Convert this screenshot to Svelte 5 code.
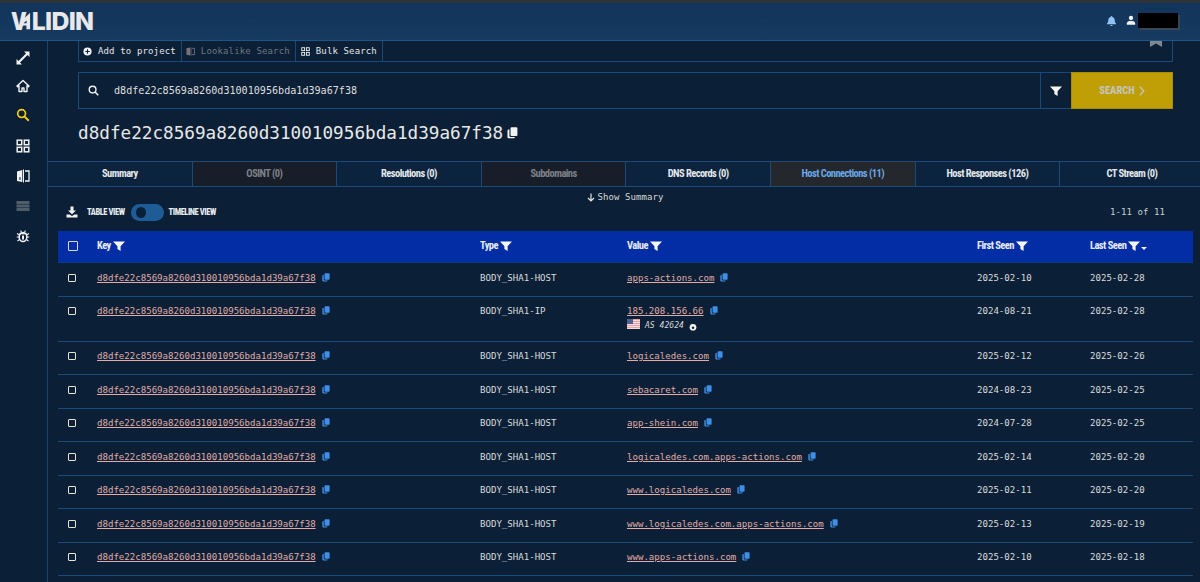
<script>
  const hash = 'd8dfe22c8569a8260d310010956bda1d39a67f38';
  const tabs = [
    { label: 'Summary' },
    { label: 'OSINT (0)', off: true },
    { label: 'Resolutions (0)' },
    { label: 'Subdomains', off: true },
    { label: 'DNS Records (0)' },
    { label: 'Host Connections (11)', active: true },
    { label: 'Host Responses (126)' },
    { label: 'CT Stream (0)' }
  ];
  const rows = [
    ['BODY_SHA1-HOST', 'apps-actions.com', '2025-02-10', '2025-02-28'],
    ['BODY_SHA1-IP', '185.208.156.66', '2024-08-21', '2025-02-28', true],
    ['BODY_SHA1-HOST', 'logicaledes.com', '2025-02-12', '2025-02-26'],
    ['BODY_SHA1-HOST', 'sebacaret.com', '2024-08-23', '2025-02-25'],
    ['BODY_SHA1-HOST', 'app-shein.com', '2024-07-28', '2025-02-25'],
    ['BODY_SHA1-HOST', 'logicaledes.com.apps-actions.com', '2025-02-14', '2025-02-20'],
    ['BODY_SHA1-HOST', 'www.logicaledes.com', '2025-02-11', '2025-02-20'],
    ['BODY_SHA1-HOST', 'www.logicaledes.com.apps-actions.com', '2025-02-13', '2025-02-19'],
    ['BODY_SHA1-HOST', 'www.apps-actions.com', '2025-02-10', '2025-02-18']
  ];
</script>

{#snippet funnel(cls)}
  <svg class={cls} viewBox="0 0 12 10"><path d="M0 .5h12L7.600 5.300V10L4.400 8V5.300z" fill="currentColor" /></svg>
{/snippet}
{#snippet copy()}
  <svg class="copy" viewBox="0 0 10 11"><rect x="3.200" y="0.300" width="6.300" height="8" rx="1" fill="#3f8fe8" /><path d="M2.200 2.400H1.400a1 1 0 0 0-1 1v6a1 1 0 0 0 1 1h4.800a1 1 0 0 0 1-1v-.2H3.200a1 1 0 0 1-1-1z" fill="#3f8fe8" /></svg>
{/snippet}

<div class="page">
  <div class="strip"></div>
  <header class="topbar">
    <div class="logo">
      <span class="vee">V</span>
      <svg class="amark" viewBox="0 0 12 18"><path d="M11 0v18H7v-4H0v-3.500z" fill="#e9e9e9" /><path d="M7.200 8.500v3H3.800z" fill="#15385d" /></svg>
      <span class="rest">LIDIN</span>
    </div>
    <div class="account">
      <svg class="bell" viewBox="0 0 12 12"><path d="M6 .5c.6 0 1 .4 1 1 1.700.4 2.500 1.800 2.500 3.400 0 2.200.6 3 1.500 3.900v.7H1v-.7c.9-.9 1.500-1.700 1.500-3.900C2.500 3.300 3.300 1.900 5 1.500c0-.6.4-1 1-1zM4.700 10.300h2.600c0 .7-.6 1.200-1.300 1.200s-1.300-.5-1.300-1.200z" fill="#8ec1f5" /></svg>
      <svg class="user" viewBox="0 0 12 12"><circle cx="6" cy="3" r="2.600" fill="#f1f1f1" /><path d="M1 11V9.500C1 7.800 2.600 6.500 4.200 6.500h3.600C9.400 6.500 11 7.800 11 9.500V11z" fill="#f1f1f1" /></svg>
      <div class="redact"></div>
    </div>
  </header>

  <div class="body">
    <nav class="side">
      <svg class="ni" viewBox="0 0 14 14"><path d="M8 0.500H13.500V6L11.500 4 4 11.500 6 13.500H.5V8l2 2L10 2.500z" fill="#f2f2f2" /></svg>
      <svg class="ni n2" viewBox="0 0 14 14"><path d="M7 1.500 1 7l.7.8L3 6.700V12.500h3V9h2v3.500h3V6.700l1.300 1.100.7-.8z" fill="none" stroke="#f2f2f2" stroke-width="1.400" stroke-linejoin="round" /></svg>
      <svg class="ni n3" viewBox="0 0 14 14"><circle cx="5.600" cy="5.600" r="3.900" fill="none" stroke="#f3cf13" stroke-width="1.700" /><path d="m8.600 8.600 4.200 4.200" stroke="#f3cf13" stroke-width="2" /></svg>
      <svg class="ni n4" viewBox="0 0 14 14"><g fill="none" stroke="#f2f2f2" stroke-width="1.500"><rect x="1.200" y="1.200" width="4.500" height="4.500" /><rect x="8.300" y="1.200" width="4.500" height="4.500" /><rect x="1.200" y="8.300" width="4.500" height="4.500" /><rect x="8.300" y="8.300" width="4.500" height="4.500" /></g></svg>
      <svg class="ni" viewBox="0 0 14 14"><path d="M1 2.500 6.300 1v12L1 12z" fill="#f2f2f2" /><path d="M7.500 .5v13" stroke="#f2f2f2" /><path d="M9 2h4v10H9" fill="none" stroke="#f2f2f2" stroke-width="1.300" /><path d="M4 8v3" stroke="#0b2036" /></svg>
      <svg class="ni dim" viewBox="0 0 14 14"><g fill="#4f5c6a"><rect x=".5" y="2" width="13" height="3" /><rect x=".5" y="5.500" width="13" height="3" /><rect x=".5" y="9" width="13" height="3" /></g></svg>
      <svg class="ni" viewBox="0 0 14 14"><g stroke="#f2f2f2" stroke-width="1.100"><path d="M1 4.500 3.500 6M13 4.500 10.500 6M.8 8h2.500M13.200 8h-2.500M1.500 12l2-1.500M12.500 12l-2-1.500M4.500 1.500 5.500 3M9.500 1.500 8.500 3" /></g><ellipse cx="7" cy="8" rx="3.800" ry="4.500" fill="none" stroke="#f2f2f2" stroke-width="1.500" /><path d="M3.500 3.800h7v1.500h-7z" fill="#f2f2f2" /><rect x="6" y="6.500" width="2" height="4" fill="#f2f2f2" /></svg>
    </nav>

    <main class="main">
      <section class="search-area">
        <div class="actions">
          <button class="act">
            <svg class="ai" viewBox="0 0 10 10"><circle cx="5" cy="5" r="4.500" fill="#f2f2f2" /><path d="M5 2.500v5M2.500 5h5" stroke="#0b2036" stroke-width="1.200" /></svg>
            Add to project
          </button>
          <button class="act off">
            <svg class="ai" viewBox="0 0 10 10"><path d="M.5 1.500 4.500.5v9l-4-1z" fill="#75717a" /><path d="M5.500.5v9M6.500 1.500h3v7h-3" fill="none" stroke="#75717a" /></svg>
            Lookalike Search
          </button>
          <button class="act">
            <svg class="ai" viewBox="0 0 10 10"><g fill="none" stroke="#f2f2f2" stroke-width="1"><rect x=".8" y=".8" width="3.200" height="3.200" /><rect x="6" y=".8" width="3.200" height="3.200" /><rect x=".8" y="6" width="3.200" height="3.200" /><rect x="6" y="6" width="3.200" height="3.200" /></g></svg>
            Bulk Search
          </button>
          <svg class="bookmark" viewBox="0 0 12 6"><path d="M0 0h12v6L6 2.500 0 6z" fill="#7d8894" /></svg>
        </div>

        <div class="searchbar">
          <svg class="si" viewBox="0 0 12 12"><circle cx="5" cy="5" r="3.700" fill="none" stroke="#f2f2f2" stroke-width="1.500" /><path d="m7.700 7.700 3.500 3.500" stroke="#f2f2f2" stroke-width="1.700" /></svg>
          <span class="q">{hash}</span>
          <div class="filter-btn">{@render funnel('fl')}</div>
          <button class="go">SEARCH<svg class="chev" viewBox="0 0 6 10"><path d="m.8.800 4 4.200-4 4.200" fill="none" stroke="#c4c4c0" stroke-width="1.300" /></svg></button>
        </div>

        <h1 class="title">{hash}<svg class="title-copy" viewBox="0 0 10 11"><rect x="3.200" y=".3" width="6.300" height="8" rx="1" fill="#f2f2f2" /><path d="M2.200 2.400H1.400a1 1 0 0 0-1 1v6a1 1 0 0 0 1 1h4.800a1 1 0 0 0 1-1v-.2H3.200a1 1 0 0 1-1-1z" fill="#f2f2f2" /></svg></h1>
      </section>

      <div class="tabs">
        {#each tabs as t}
          <div class="tab" class:off={t.off} class:active={t.active}>{t.label}</div>
        {/each}
      </div>

      <div class="show"><svg class="arrow" viewBox="0 0 8 9"><path d="M4 .5v7.500M1 5l3 3 3-3" fill="none" stroke="#e4e4e4" stroke-width="1.200" /></svg>Show Summary</div>

      <div class="toolbar">
        <svg class="dl" viewBox="0 0 12 12"><path d="M4.500 .5h3v4H10L6 8.300 2 4.500h2.500z" fill="#f2f2f2" /><path d="M.5 8.500h3L6 10l2.500-1.500h3v3H.5z" fill="#f2f2f2" /></svg>
        <span class="vlabel">TABLE VIEW</span>
        <span class="toggle"><span class="knob"></span></span>
        <span class="vlabel">TIMELINE VIEW</span>
        <span class="count">1-11 of 11</span>
      </div>

      <div class="table">
        <div class="row head">
          <div class="c0"><span class="cb hcb"></span></div>
          <div class="c1">Key{@render funnel('hf')}</div>
          <div class="c2">Type{@render funnel('hf')}</div>
          <div class="c3">Value{@render funnel('hf')}</div>
          <div class="c4">First Seen{@render funnel('hf')}</div>
          <div class="c5">Last Seen{@render funnel('hf')}<span class="caret"></span></div>
        </div>
        {#each rows as r}
          <div class="row">
            <div class="c0"><span class="cb"></span></div>
            <div class="c1"><span class="link">{hash}</span>{@render copy()}</div>
            <div class="c2">{r[0]}</div>
            <div class="c3">
              <div><span class="link">{r[1]}</span>{@render copy()}</div>
              {#if r[4]}
                <div class="asn">
                  <svg class="flag" viewBox="0 0 13 10"><rect width="13" height="10" fill="#e8a3a8" /><path d="M0 1.500h13M0 3.500h13M0 5.500h13M0 7.500h13M0 9.500h13" stroke="#f1dcdc" /><rect width="6" height="5" fill="#54608f" /></svg>
                  <em>AS 42624</em>
                  <svg class="fire" viewBox="0 0 10 10"><circle cx="5" cy="5.300" r="4.200" fill="#f2f2f2" /><circle cx="5" cy="6" r="1.600" fill="#26282c" /><path d="M3 1 6 2 4.500 3.500z" fill="#f2f2f2" /></svg>
                </div>
              {/if}
            </div>
            <div class="c4">{r[2]}</div>
            <div class="c5">{r[3]}</div>
          </div>
        {/each}
      </div>
    </main>
  </div>
</div>

<style>
  :global(body) { margin: 0; background: #0b2036; overflow: hidden; }
  .page { width: 1200px; height: 582px; overflow: hidden; background: #0b2036; color: #e6e6e6; font-family: "DejaVu Sans Mono", monospace; }
  .strip { height: 3px; background: #2f3439; }
  .topbar { height: 37px; display: flex; align-items: center; justify-content: space-between; background: linear-gradient(#12345a, #163a60); border-bottom: 1px solid #1f5487; }
  .logo { margin-left: 11px; font: 800 24.800px/1 "Inter", sans-serif; color: #e9e9e9; display: flex; align-items: center; }
  .vee { font-weight: 900; transform: scaleX(.8); transform-origin: left center; }
  .amark { width: 11px; height: 18px; margin-left: -11px; }
  .rest { margin-left: 1px; letter-spacing: -.7px; }
  .account { display: flex; align-items: center; margin-right: 22px; margin-top: -2px; }
  .bell { width: 11px; height: 12px; margin-right: 9px; }
  .user { width: 10px; height: 11px; margin-right: 2px; }
  .redact { width: 40px; height: 15px; background: #000; box-shadow: 2px 2px 0 #3a4654; }

  .body { display: flex; height: 541px; }
  .side { width: 47px; flex: none; border-right: 1px solid #1b446d; display: flex; flex-direction: column; align-items: center; gap: 16px; padding: 10px 0 0; }
  .ni { width: 14px; height: 14px; margin-right: 1px; }
  .n2 { margin-top: -2px; }
  .n3 { margin-top: -1px; }
  .n4 { margin-top: 1px; }

  .main { flex: 1; min-width: 0; overflow: hidden; }
  .search-area { padding: 0 27px 0 30px; height: 120px; }
  .actions { height: 20px; display: flex; border: 1px solid #1b4a7a; border-top: none; position: relative; }
  .act { background: transparent; border: none; border-right: 1px solid #1b4a7a; color: #e6e6e6; font: 9px "DejaVu Sans Mono", monospace; letter-spacing: .14px; padding: 0 5px 0 4px; display: flex; align-items: center; gap: 6px; white-space: nowrap; height: 20px; }
  .act:last-of-type { padding-left: 5px; }
  .act.off { color: #6d7680; }
  .ai { width: 9px; height: 9px; }
  .bookmark { position: absolute; right: 10px; top: 0; width: 12px; height: 6px; }

  .searchbar { margin-top: 10px; height: 37px; border: 1px solid #1b4a7a; box-sizing: border-box; display: flex; align-items: center; }
  .si { width: 11px; height: 11px; margin-left: 9px; }
  .q { font-size: 10.100px; margin-left: 15px; flex: 1; color: #dfdfdf; }
  .filter-btn { width: 30px; height: 100%; display: flex; align-items: center; justify-content: center; border-left: 1px solid #1b4a7a; }
  .fl { width: 12px; height: 10px; color: #f6f6f6; }
  .go { width: 102px; height: 37px; margin: -1px -1px -1px 0; background: #c09f06; border: 1px solid #a98c0a; color: #c4c4bc; font: 800 10.500px "Roboto", sans-serif; font-stretch: 75%; display: flex; align-items: center; justify-content: center; gap: 4px; }
  .chev { width: 6px; height: 10px; }

  .title { margin: 12px 0 0; font: 400 17.660px/24px "DejaVu Sans Mono", monospace; color: #e8e8e8; display: flex; align-items: center; }
  .title-copy { width: 11px; height: 12px; margin-left: 4px; }

  .tabs { display: grid; grid-template-columns: repeat(8, 144.600px); height: 24px; border-top: 1px solid #1b4a7a; border-bottom: 1px solid #1b4a7a; margin-left: -1px; }
  .tab { display: flex; align-items: center; justify-content: center; padding-bottom: 1px; font: 700 10.500px "Roboto", sans-serif; font-stretch: 75%; letter-spacing: -.55px; color: #e4e8ec; border-left: 1px solid #1b4a7a; background: #0b233c; }
  .tab.off { background: #171e29; color: #7d8287; }
  .tab.active { background: #24282d; color: #6aa7e6; }

  .show { height: 20px; display: flex; align-items: center; justify-content: center; padding-left: 2px; font-size: 9px; letter-spacing: .08px; color: #d8d8d8; }
  .arrow { width: 8px; height: 9px; margin-right: 3px; }

  .toolbar { height: 24px; box-sizing: border-box; padding: 0 35px 14px 18px; display: flex; align-items: center; }
  .dl { width: 12px; height: 12px; margin-right: 9px; }
  .vlabel { font: 800 8.500px "Roboto", sans-serif; font-stretch: 75%; letter-spacing: -.45px; color: #e8ecef; }
  .toggle { width: 33px; height: 17px; margin: 0 5px 0 6px; border-radius: 9px; background: #1e5c97; position: relative; flex: none; }
  .knob { position: absolute; left: 5px; top: 3px; width: 10px; height: 11px; border-radius: 50%; background: #0b2036; }
  .count { margin-left: auto; font-size: 9px; letter-spacing: .07px; color: #c9ced3; }

  .table { margin: 0 7px 0 10px; }
  .row { display: grid; grid-template-columns: 39px 383px 147px 350px 113px 1fr; align-items: start; font-size: 9.080px; color: #dadcde; border-bottom: 1px solid #1b4a7a; padding: 8.500px 0 12px; line-height: 12px; }
  .row.head { background: #032da5; height: 32px; box-sizing: border-box; padding: 0 0 2px; align-items: center; font: 700 10.500px "Roboto", sans-serif; font-stretch: 75%; letter-spacing: -.55px; color: #e8ecf4; border-bottom: 1px solid #0a3b88; }
  .c0 { padding-left: 10px; display: flex; align-items: center; }
  .cb { width: 6px; height: 6px; border: 1px solid #e6e6d8; border-radius: 1px; display: block; margin-top: 2px; }
  .hcb { width: 8px; height: 8px; margin-top: 0; border-color: #d6dcef; }
  .hf { width: 12px; height: 10px; color: #f4f6fb; vertical-align: -1.500px; margin-left: 2px; }
  .caret { display: inline-block; width: 0; height: 0; border-left: 3.500px solid transparent; border-right: 3.500px solid transparent; border-top: 3.500px solid #eef; margin-left: 1px; vertical-align: -1px; }
  .link { color: #e0aca8; text-decoration: underline; text-underline-offset: 1px; }
  .copy { width: 8px; height: 9px; margin-left: 6px; vertical-align: -1px; }
  .asn { display: flex; align-items: flex-start; height: 11.500px; font-size: 8.100px; color: #d8d8d8; }
  .asn em { margin-left: 5px; margin-top: 2px; }
  .flag { width: 13px; height: 10px; margin-top: 2px; }
  .fire { width: 8px; height: 8px; margin-left: 5px; margin-top: 6px; }
</style>
